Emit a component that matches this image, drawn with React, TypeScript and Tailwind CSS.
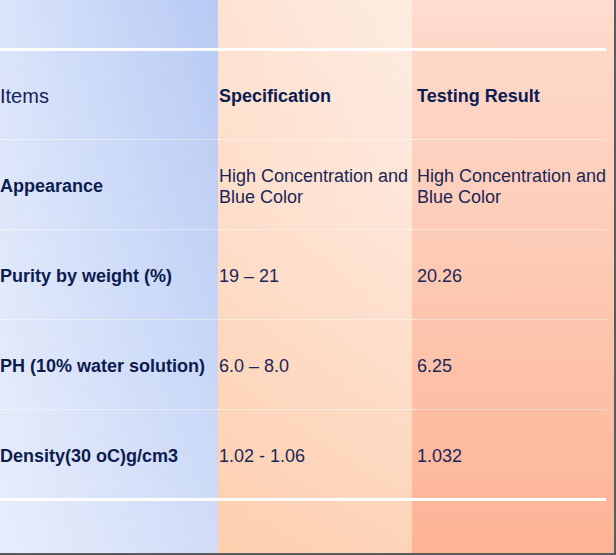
import React from 'react'

type Col = {
  key: string
  width: string
  bg: string
  pad: string
  lineW: string
  header: string
  headerClass: string
  cells: string[]
  cellClass: string
}

const cols: Col[] = [
  {
    key: 'items',
    width: 'w-[218px]',
    bg: 'bg-[linear-gradient(to_bottom,rgba(255,255,255,0)_0%,rgba(255,255,255,0.35)_100%),linear-gradient(to_right,#dae4fa,#b7caf4)]',
    pad: 'pl-0',
    lineW: 'w-full',
    header: 'Items',
    headerClass: 'text-[20px] font-normal text-[#14215a]',
    cells: ['Appearance', 'Purity by weight (%)', 'PH (10% water solution)', 'Density(30 oC)g/cm3'],
    cellClass: 'text-[18px] font-bold text-[#0c1b50]',
  },
  {
    key: 'spec',
    width: 'w-[194px]',
    bg: 'bg-[linear-gradient(to_right,rgba(253,205,172,0.25),rgba(255,255,255,0.1)),linear-gradient(to_bottom,#feeadf,#fee3d3_40%,#fdcfb0)]',
    pad: 'pl-[1px]',
    lineW: 'w-full',
    header: 'Specification',
    headerClass: 'text-[18px] font-bold text-[#0c1b50]',
    cells: ['High Concentration and Blue Color', '19 – 21', '6.0 – 8.0', '1.02 - 1.06'],
    cellClass: 'text-[18px] font-normal text-[#1c2656]',
  },
  {
    key: 'result',
    width: 'w-[202px]',
    bg: 'bg-[linear-gradient(to_bottom,#fedccf,#fdcbb6_45%,#fdb395)]',
    pad: 'pl-[5px]',
    lineW: 'w-[194px]',
    header: 'Testing Result',
    headerClass: 'text-[18px] font-bold text-[#0c1b50]',
    cells: ['High Concentration and Blue Color', '20.26', '6.25', '1.032'],
    cellClass: 'text-[18px] font-normal text-[#1c2656]',
  },
]

const rowH = ['h-[89px]', 'h-[89px]', 'h-[89px]', 'h-[88px]']

export default function App() {
  return (
    <div className="flex w-[616px] h-[555px] overflow-hidden border-r-2 border-b-2 border-[#5b5b5b] font-['Liberation_Sans',Arial,sans-serif]">
      {cols.map(c => (
        <div key={c.key} className={`flex flex-col shrink-0 h-full ${c.width} ${c.bg}`}>
          <div className="h-[48px]" />
          <div className={`h-[3px] bg-white ${c.lineW}`} />
          <div className={`h-[88px] flex items-center pt-[2px] ${c.pad} ${c.headerClass}`}>{c.header}</div>
          {c.cells.map((t, i) => (
            <React.Fragment key={i}>
              <div className={`h-0 border-t border-dotted border-white/80 ${c.lineW}`} />
              <div className={`${rowH[i]} flex items-center pt-[4px] leading-[21px] ${c.pad} ${c.cellClass}`}>{t}</div>
            </React.Fragment>
          ))}
          <div className={`h-[3px] bg-white ${c.lineW}`} />
        </div>
      ))}
    </div>
  )
}
